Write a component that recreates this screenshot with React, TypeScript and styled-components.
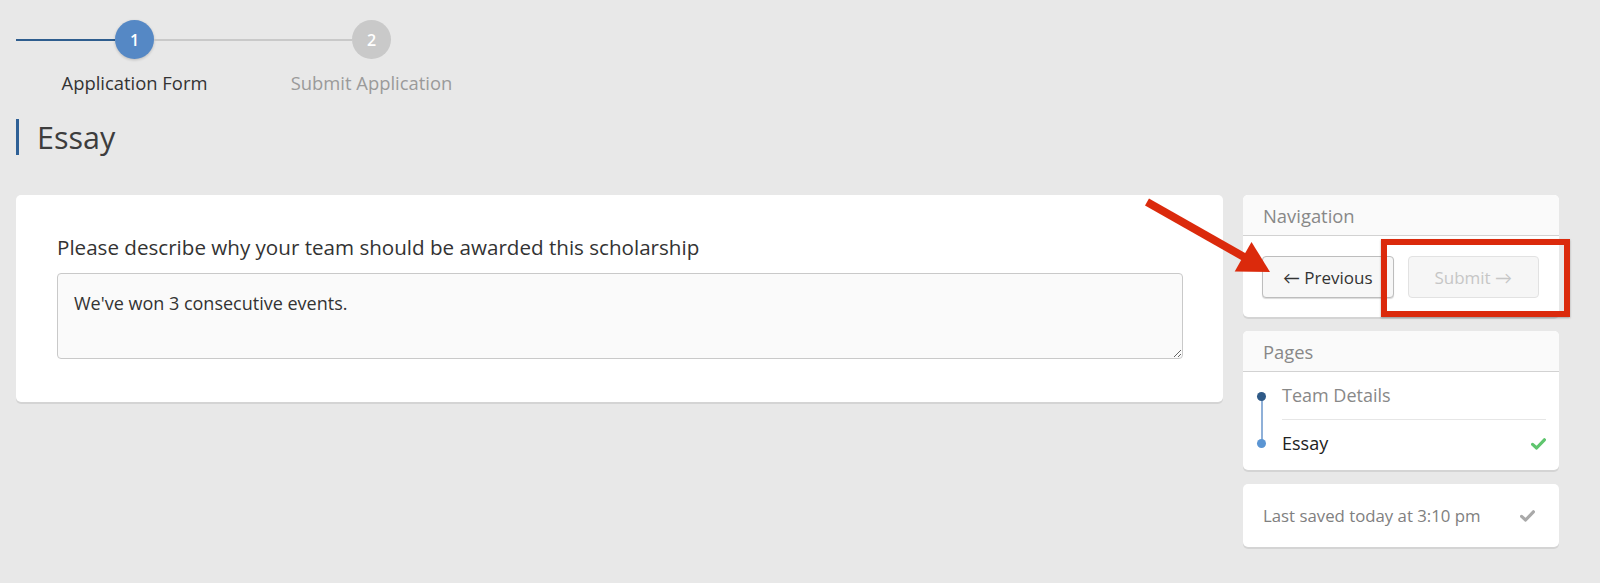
import React from 'react';
import styled, { createGlobalStyle } from 'styled-components';

const FONT = `'Open Sans', Lato, Arial, sans-serif`;

const GlobalStyle = createGlobalStyle`
  html,
  body {
    margin: 0;
    padding: 0;
    background: #e8e8e8;
  }

  body {
    font-family: ${FONT};
    color: #333;
  }

  * {
    box-sizing: border-box;
  }
`;

type StepState = 'active' | 'todo';

const steps: { num: number; label: string; state: StepState }[] = [
  { num: 1, label: 'Application Form', state: 'active' },
  { num: 2, label: 'Submit Application', state: 'todo' },
];

const Check = ({ color }: { color: string }) => (
  <svg width="15" height="12" viewBox="0 0 15 12" fill="none">
    <path d="M1.6 6.4 L5.6 10 L13.4 1.8" stroke={color} strokeWidth="3.2" strokeLinecap="round" strokeLinejoin="round" />
  </svg>
);

const App = () => {
  return (
    <>
      <GlobalStyle />
      <Page>
        <Stepper>
          {steps.map((step, i) => (
            <Step key={step.num}>
              <Track>
                <Segment $color={i === 0 ? '#2e5d8e' : '#c9c9c9'} />
                <Circle $state={step.state}>{step.num}</Circle>
                <Segment $color={i === steps.length - 1 ? 'transparent' : '#c9c9c9'} />
              </Track>
              <StepLabel $state={step.state}>{step.label}</StepLabel>
            </Step>
          ))}
        </Stepper>

        <Title>Essay</Title>

        <Layout>
          <MainCard>
            <FieldLabel htmlFor="essay">Please describe why your team should be awarded this scholarship</FieldLabel>
            <TextArea id="essay" defaultValue="We've won 3 consecutive events." />
          </MainCard>

          <Sidebar>
            <Panel>
              <PanelHeader>Navigation</PanelHeader>
              <NavBody>
                <NavButton type="button">← Previous</NavButton>
                <NavButton type="button" disabled>
                  Submit →
                </NavButton>
              </NavBody>
            </Panel>

            <Panel>
              <PanelHeader>Pages</PanelHeader>
              <PageList>
                <PageItem>
                  <Marker $position="first">
                    <Dot $color="#2f5a87" />
                  </Marker>
                  <PageContent $divider>
                    <PageName $current={false}>Team Details</PageName>
                  </PageContent>
                </PageItem>
                <PageItem>
                  <Marker $position="last">
                    <Dot $color="#5b95d3" />
                  </Marker>
                  <PageContent $divider={false}>
                    <PageName $current>Essay</PageName>
                    <Check color="#5fc56e" />
                  </PageContent>
                </PageItem>
              </PageList>
            </Panel>

            <SavedPanel>
              <SavedText>Last saved today at 3:10 pm</SavedText>
              <Check color="#a9a9a9" />
            </SavedPanel>
          </Sidebar>
        </Layout>

        {/* screenshot annotations */}
        <Arrow width="150" height="95" viewBox="0 0 150 95">
          <line x1="17" y1="12" x2="114" y2="67" stroke="#db2a0c" strokeWidth="8" />
          <polygon points="140,82 104.7,81.5 121.5,51.9" fill="#db2a0c" />
        </Arrow>
        <Highlight />
      </Page>
    </>
  );
};

const Page = styled.div`
  position: relative;
  padding: 20px 41px 36px 16px;
`;

const Stepper = styled.div`
  display: flex;
`;

const Step = styled.div`
  width: 237px;
  display: flex;
  flex-direction: column;
  align-items: center;
`;

const Track = styled.div`
  width: 100%;
  height: 39px;
  display: flex;
  align-items: center;
`;

const Segment = styled.div<{ $color: string }>`
  flex: 1;
  height: 2px;
  background: ${(p) => p.$color};
`;

const Circle = styled.div<{ $state: StepState }>`
  width: 39px;
  height: 39px;
  border-radius: 50%;
  display: flex;
  align-items: center;
  justify-content: center;
  font-size: 16px;
  font-weight: 600;
  color: #fff;
  background: ${(p) => (p.$state === 'active' ? '#5588c5' : '#c9c9c9')};
  box-shadow: ${(p) => (p.$state === 'active' ? '0 1px 3px rgba(0, 0, 0, 0.2)' : 'none')};
`;

const StepLabel = styled.div<{ $state: StepState }>`
  margin-top: 13px;
  font-size: 18.4px;
  line-height: 22px;
  white-space: nowrap;
  color: ${(p) => (p.$state === 'active' ? '#333' : '#9a9a9a')};
`;

const Title = styled.h1`
  margin: 25px 0 0;
  height: 36px;
  padding-left: 18px;
  border-left: 3px solid #2e6096;
  font-size: 30.5px;
  font-weight: 400;
  line-height: 36px;
  color: #3d3d3d;
`;

const Layout = styled.div`
  margin-top: 40px;
  display: grid;
  grid-template-columns: 1fr 316px;
  gap: 20px;
  align-items: start;
`;

const Card = styled.div`
  background: #fff;
  border-radius: 5px;
  box-shadow: 0 2px 0 #d4d4d4;
`;

const MainCard = styled(Card)`
  padding: 40px 40px 43px 41px;
`;

const FieldLabel = styled.label`
  display: block;
  font-size: 20.6px;
  line-height: 24px;
  color: #333;
  margin-bottom: 14px;
`;

const TextArea = styled.textarea`
  display: block;
  width: 100%;
  height: 86px;
  padding: 17px 16px;
  border: 1px solid #c9c9c9;
  border-radius: 4px;
  background: #fafafa;
  font-family: ${FONT};
  font-size: 18px;
  line-height: 24px;
  color: #333;
  resize: vertical;
  outline: none;
`;

const Sidebar = styled.div`
  display: flex;
  flex-direction: column;
  gap: 14px;
`;

const Panel = styled(Card)`
  overflow: hidden;
`;

const PanelHeader = styled.div`
  height: 41px;
  padding: 0 20px;
  display: flex;
  align-items: center;
  background: #fafafa;
  border-bottom: 1px solid #d2d2d2;
  font-size: 18.4px;
  color: #888;
`;

const NavBody = styled.div`
  display: flex;
  gap: 14px;
  padding: 20px 20px 19px 19px;
`;

const NavButton = styled.button`
  flex: 1;
  height: 42px;
  border-radius: 4px;
  font-family: ${FONT};
  font-size: 17px;
  color: #333;
  background: #f7f7f7;
  border: 1px solid #bdbdbd;
  box-shadow: 0 1px 1px rgba(0, 0, 0, 0.15);
  cursor: pointer;

  &:disabled {
    color: #c6c6c6;
    background: #f6f6f6;
    border-color: #e2e2e2;
    box-shadow: none;
    cursor: default;
  }
`;

const PageList = styled.div`
  padding: 0 13px 3px 14px;
`;

type Position = 'first' | 'last';

const PageItem = styled.div`
  display: flex;
  align-items: stretch;
`;

const Marker = styled.div<{ $position: Position }>`
  position: relative;
  width: 9px;
  margin-right: 16px;
  display: flex;
  align-items: center;

  &::before {
    content: '';
    position: absolute;
    left: 3.5px;
    width: 2px;
    background: #8fb0d8;
    ${(p) => (p.$position === 'first' ? 'top: 50%; bottom: 0;' : 'top: 0; bottom: 50%;')}
  }
`;

const Dot = styled.div<{ $color: string }>`
  position: relative;
  width: 9px;
  height: 9px;
  border-radius: 50%;
  background: ${(p) => p.$color};
`;

const PageContent = styled.div<{ $divider: boolean }>`
  flex: 1;
  display: flex;
  align-items: center;
  justify-content: space-between;
  padding: 12px 0;
  border-bottom: ${(p) => (p.$divider ? '1px solid #e6e6e6' : 'none')};
`;

const PageName = styled.span<{ $current: boolean }>`
  font-size: 18px;
  line-height: 23px;
  color: ${(p) => (p.$current ? '#222' : '#888')};
`;

const SavedPanel = styled(Card)`
  height: 63px;
  padding: 0 24px 0 20px;
  display: flex;
  align-items: center;
  justify-content: space-between;
`;

const SavedText = styled.span`
  font-size: 16.8px;
  color: #808080;
`;

const Arrow = styled.svg`
  position: absolute;
  left: 1130px;
  top: 190px;
  pointer-events: none;
`;

const Highlight = styled.div`
  position: absolute;
  left: 1381px;
  top: 239px;
  width: 189px;
  height: 78px;
  border: 6px solid #db2a0c;
  box-shadow: 0 1px 2px rgba(0, 0, 0, 0.3);
  pointer-events: none;
`;

export default App;
